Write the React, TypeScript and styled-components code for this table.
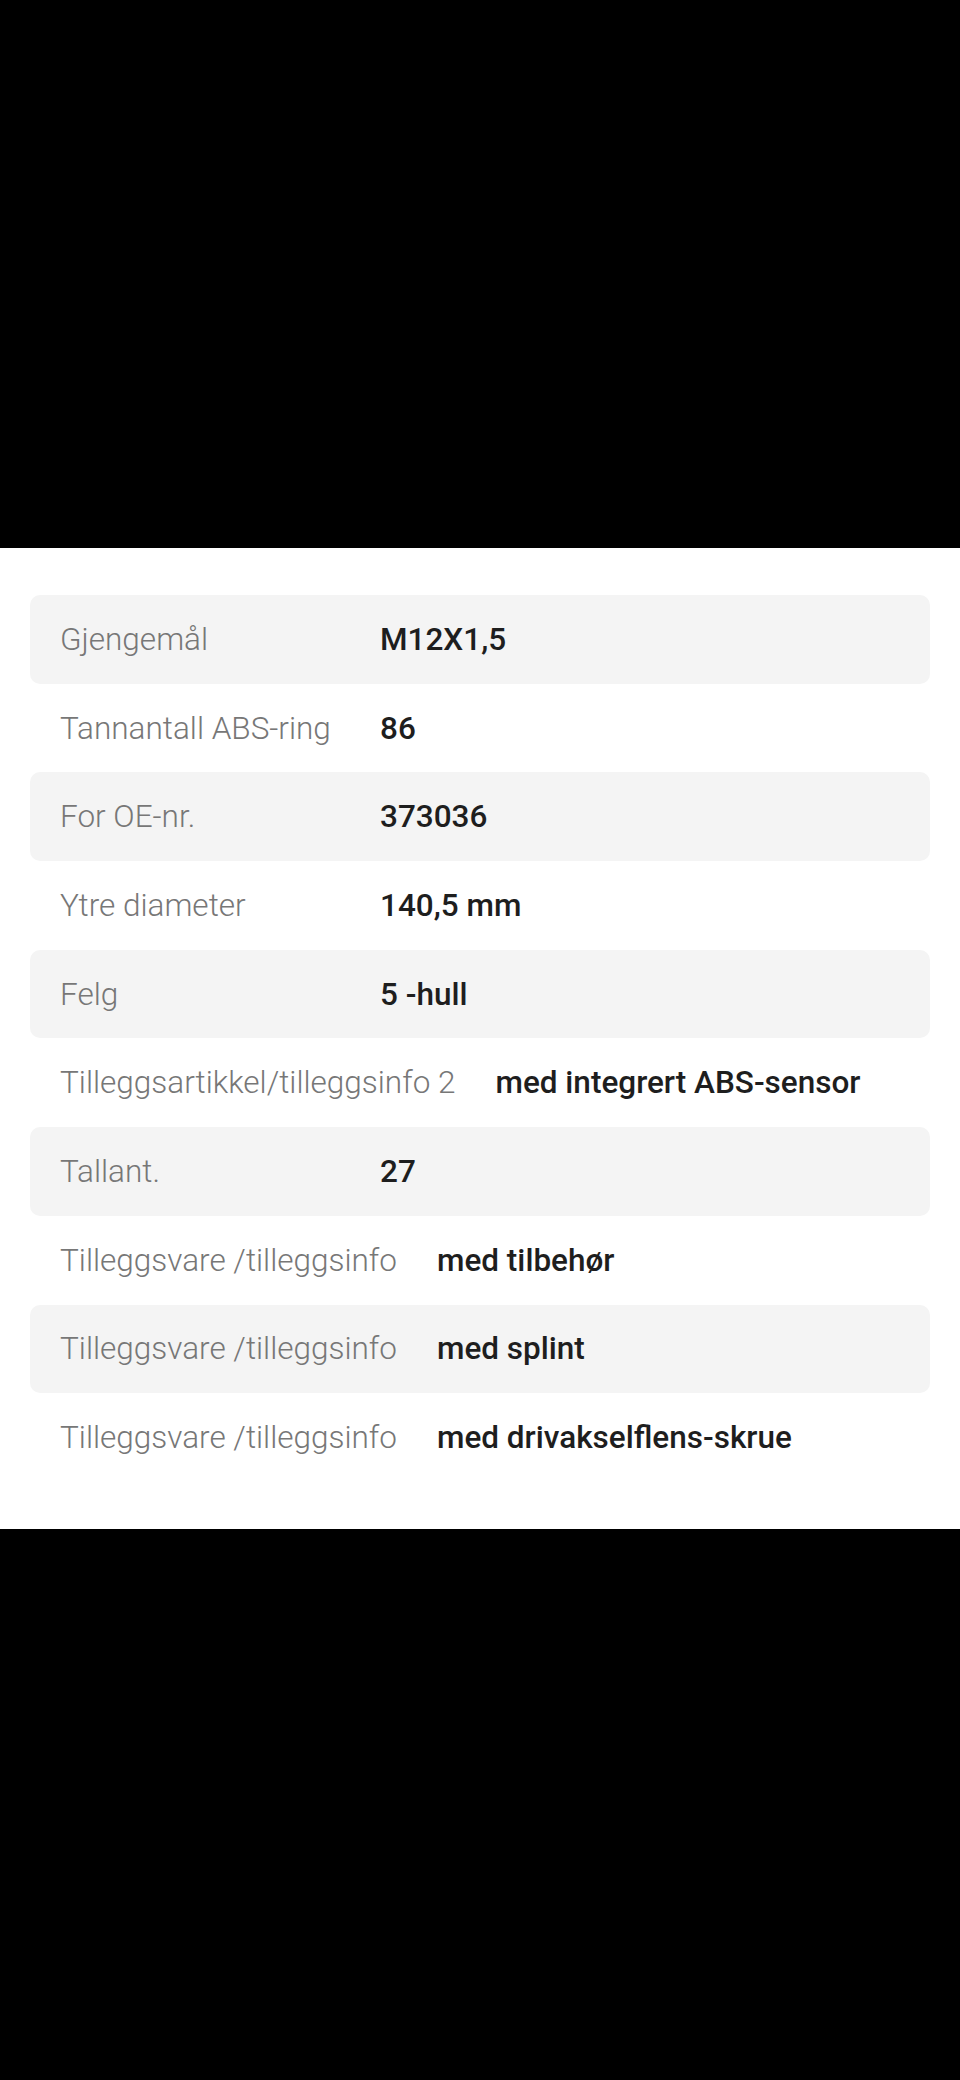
import styled, { createGlobalStyle } from "styled-components";

interface ISpec {
    label: string,
    value: string,
}

const specs: ISpec[] = [
    { label: "Gjengemål", value: "M12X1,5" },
    { label: "Tannantall ABS-ring", value: "86" },
    { label: "For OE-nr.", value: "373036" },
    { label: "Ytre diameter", value: "140,5 mm" },
    { label: "Felg", value: "5 -hull" },
    { label: "Tilleggsartikkel/tilleggsinfo 2", value: "med integrert ABS-sensor" },
    { label: "Tallant.", value: "27" },
    { label: "Tilleggsvare /tilleggsinfo", value: "med tilbehør" },
    { label: "Tilleggsvare /tilleggsinfo", value: "med splint" },
    { label: "Tilleggsvare /tilleggsinfo", value: "med drivakselflens-skrue" },
];

const GlobalStyle = createGlobalStyle`
  html, body {
    margin: 0;
    padding: 0;
    background: #000;
  }
  body {
    font-family: Roboto, "Noto Sans", sans-serif;
  }
`;

const Screen = styled.div`
  display: flex;
  flex-direction: column;
  width: 960px;
  height: 2080px;
  background: #000;
`;

const Blank = styled.div<{ h: number }>`
  height: ${(props) => props.h}px;
  flex-shrink: 0;
`;

const Panel = styled.div`
  background: #fff;
  padding: 47px 30px 47px 30px;
`;

const Row = styled.div<{ shaded: boolean }>`
  display: flex;
  align-items: center;
  height: 88.7px;
  padding-left: 30px;
  border-radius: 10px;
  background: ${(props) => (props.shaded ? "#f4f4f4" : "transparent")};
`;

const Label = styled.span`
  min-width: 280px;
  margin-right: 40px;
  font-size: 31.5px;
  font-weight: 300;
  color: #777;
  white-space: nowrap;
`;

const Value = styled.span`
  font-size: 31.5px;
  font-weight: 500;
  color: #1e1e1e;
  white-space: nowrap;
`;

function App() {
    return (
        <>
            <GlobalStyle />
            <Screen>
                <Blank h={548} />
                <Panel>
                    {specs.map((spec, i) => (
                        <Row key={i} shaded={i % 2 === 0}>
                            <Label>{spec.label}</Label>
                            <Value>{spec.value}</Value>
                        </Row>
                    ))}
                </Panel>
            </Screen>
        </>
    );
}
export default App;
